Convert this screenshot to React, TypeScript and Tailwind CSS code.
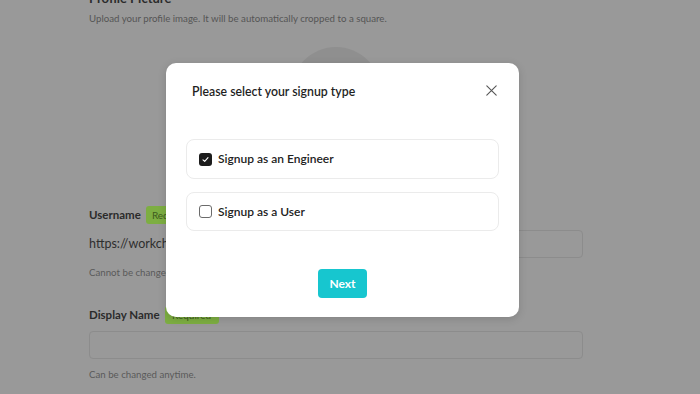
import React from "react";

export default function App() {
  return (
    <div className="relative h-[394px] w-[700px] overflow-hidden bg-[#999999] font-['Lato',sans-serif]">
      {/* dimmed page */}
      <div className="-mt-[10px] w-[583px] pl-[89px]">
        <h3 className="text-[13px] font-bold leading-[16px] text-[#2b2b2b]">Profile Picture</h3>
        <p className="mt-[5px] text-[9.7px] leading-[14px] text-[#555555]">
          Upload your profile image. It will be automatically cropped to a square.
        </p>
        <div className="mt-[22px] flex justify-center">
          <div className="h-[90px] w-[90px] rounded-full bg-[#8f8f8f]" />
        </div>

        <div className="mt-[69px] flex h-[18px] items-center gap-[5px]">
          <span className="text-[11.5px] font-bold text-[#2b2b2b]">Username</span>
          <span className="flex h-[18px] items-center rounded-[3px] bg-[#7dae42] px-[6px] text-[10px] text-[#3d5a1e]">
            Required
          </span>
        </div>
        <div className="mt-[6px] flex h-[28px] items-center gap-[4px]">
          <span className="text-[12.5px] text-[#2e2e2e]">https://workchat.app/</span>
          <div className="h-[28px] flex-1 rounded-[4px] border border-[#8c8c8c]" />
        </div>
        <p className="mt-[7px] text-[9.7px] leading-[14px] text-[#5a5a5a]">
          Cannot be changed once it is set. Your data will be removed.
        </p>

        <div className="mt-[27px] flex h-[18px] items-center gap-[5px]">
          <span className="text-[11.5px] font-bold text-[#2b2b2b]">Display Name</span>
          <span className="flex h-[18px] w-[54px] items-center justify-center rounded-[3px] bg-[#7dae42] text-[10px] text-[#3d5a1e]">
            Required
          </span>
        </div>
        <div className="mt-[7px] h-[28px] rounded-[4px] border border-[#8c8c8c]" />
        <p className="mt-[8px] text-[9.7px] leading-[14px] text-[#5a5a5a]">Can be changed anytime.</p>
      </div>

      {/* modal */}
      <div className="absolute left-[166px] top-[63px] flex h-[254px] w-[353px] flex-col rounded-[10px] bg-white px-[20px] pb-[19px] pt-[19px] font-['Lato',sans-serif] shadow-[0_2px_8px_rgba(0,0,0,0.15)]">
        <div className="flex items-center justify-between pl-[6px] pr-[2px]">
          <h2 className="text-[12.3px] font-semibold leading-[20px] text-[#1f1f1f]">Please select your signup type</h2>
          <svg width="11" height="11" viewBox="0 0 11 11" className="-mt-[4px]">
            <path d="M0.8 0.8L10.2 10.2M10.2 0.8L0.8 10.2" stroke="#555" strokeWidth="1.1" strokeLinecap="round" />
          </svg>
        </div>

        <div className="mt-[37px] flex flex-col gap-[13px]">
          <div className="flex h-[40px] items-center gap-[6px] rounded-[8px] border border-[#ebebeb] pl-[12px]">
            <span className="flex h-[13px] w-[13px] items-center justify-center rounded-[3px] bg-[#1c1c1c]">
              <svg width="9" height="9" viewBox="0 0 9 9">
                <path d="M2 4.8L3.7 6.4L7 2.6" stroke="white" strokeWidth="1.1" fill="none" strokeLinecap="round" strokeLinejoin="round" />
              </svg>
            </span>
            <span className="text-[12px] font-semibold text-[#222]">Signup as an Engineer</span>
          </div>
          <div className="flex h-[39px] items-center gap-[6px] rounded-[8px] border border-[#ebebeb] pl-[12px]">
            <span className="h-[13px] w-[13px] rounded-[3px] border-[1.5px] border-[#6b6b6b] bg-white" />
            <span className="text-[12px] font-semibold text-[#222]">Signup as a User</span>
          </div>
        </div>

        <div className="mt-auto flex justify-center">
          <button className="h-[29px] w-[49px] rounded-[4px] bg-[#17c6cf] text-[12px] font-bold text-white">Next</button>
        </div>
      </div>
    </div>
  );
}
